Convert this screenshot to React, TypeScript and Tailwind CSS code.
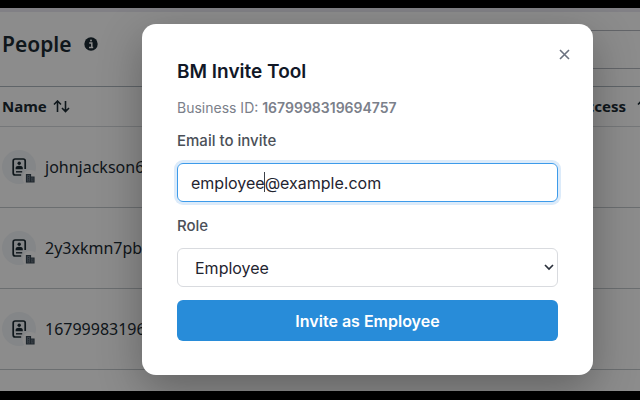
import { useState } from 'react'

const people = ['johnjackson6', '2y3xkmn7pb', '16799983196']

function SortIcon() {
  return (
    <svg width="17" height="13" viewBox="0 0 17 13" fill="none" stroke="currentColor" strokeWidth="1.6" aria-hidden="true">
      <path d="M4.5 12V1.5M1 4.5l3.5-3.5L8 4.5M12.5 1v10.5M9 8l3.5 3.5L16 8" />
    </svg>
  )
}

function PersonIcon() {
  return (
    <svg width="34" height="34" viewBox="0 0 34 34" fill="none" aria-hidden="true">
      <circle cx="17" cy="17" r="17" fill="#f1f4f7" />
      <path d="M23.2 19V11a2 2 0 0 0-2-2h-8a2 2 0 0 0-2 2v12a2 2 0 0 0 2 2h6" stroke="#1c2b33" strokeWidth="1.7" />
      <circle cx="17.2" cy="13.2" r="1.7" fill="#1c2b33" />
      <path d="M13.6 19.2V18c0-1.4 1.5-2.3 3.6-2.3s3.6.9 3.6 2.3v1.2z" fill="#1c2b33" />
      <path d="M14 21.8h6.2" stroke="#1c2b33" strokeWidth="1.4" />
      <circle cx="28.5" cy="28" r="8" fill="white" />
      <path d="M24.5 32V24.5h4V32zM28.5 27H32v5h-3.5z" fill="#6b7783" stroke="#3a4752" strokeWidth="1.2" />
      <path d="M26.5 26v5M30.3 28.5V31" stroke="#3a4752" strokeWidth="1" strokeDasharray="1.2 1" />
    </svg>
  )
}

function PeoplePage() {
  return (
    <div className="flex-1 overflow-hidden border-t-4 border-[#eceaf2] bg-white font-['Noto_Sans',sans-serif] text-[#1c2b33]">
      <div className="flex h-[74px] items-start justify-between">
        <div className="flex items-center gap-3 pt-4 pl-[2px]">
          <h1 className="text-[21px] leading-8 font-semibold">People</h1>
          <svg width="14" height="14" viewBox="0 0 14 14" aria-hidden="true">
            <circle cx="7" cy="7" r="6.7" fill="#1c2b33" />
            <path d="M5.2 6h2.6v4.2M5 10.5h4.2" stroke="white" strokeWidth="1.5" fill="none" />
            <circle cx="7" cy="3.4" r="1" fill="white" />
          </svg>
        </div>
        <div className="-mr-1 mt-[18px] h-[39px] w-1/2 border border-[#b4b9c0]" />
      </div>
      <table className="w-[calc(100%+14px)] border-collapse">
        <thead>
          <tr className="h-10 border-t border-b border-t-[#aeb6be] border-b-[#d5d9dd] text-[15px]">
            <th className="p-0 pl-[2px] text-left font-bold">
              <div className="flex items-center gap-[6px]">
                Name
                <SortIcon />
              </div>
            </th>
            <th className="p-0 font-bold">
              <div className="flex items-center justify-end gap-[11px]">
                Access
                <SortIcon />
              </div>
            </th>
          </tr>
        </thead>
        <tbody>
          {people.map((name) => (
            <tr key={name} className="h-[81px] border-b border-[#c3c8cd]">
              <td className="p-0 pl-[2px]" colSpan={2}>
                <div className="flex items-center gap-[9px] text-base">
                  <PersonIcon />
                  {name}
                </div>
              </td>
            </tr>
          ))}
        </tbody>
      </table>
    </div>
  )
}

export default function App() {
  const [email, setEmail] = useState('employee@example.com')
  const [role, setRole] = useState('Employee')

  return (
    <div className="relative flex h-screen flex-col overflow-hidden bg-black pt-2 pb-[9px] font-[Inter,sans-serif]">
      <PeoplePage />

      <div className="absolute inset-x-0 top-2 bottom-[9px] overflow-hidden bg-black/45 pt-4 pr-[47px] pl-[142px]">
        <div
          role="dialog"
          aria-labelledby="invite-title"
          className="relative rounded-[14px] bg-white px-[35px] pt-9 pb-[34px] shadow-[0_14px_44px_rgba(0,0,0,0.3)]"
        >
          <button aria-label="Close" className="absolute top-[23px] right-[21px] p-[2px] text-[#6b7280]">
            <svg width="11" height="11" viewBox="0 0 11 11" fill="none" stroke="currentColor" strokeWidth="1.6">
              <path d="M1 1l9 9M10 1l-9 9" />
            </svg>
          </button>

          <h2 id="invite-title" className="text-[19px] leading-6 font-semibold text-[#111827]">
            BM Invite Tool
          </h2>
          <p className="mt-3 text-sm leading-6 text-[#7b808a]">
            Business ID: <strong className="font-semibold">1679998319694757</strong>
          </p>

          <form onSubmit={(e) => e.preventDefault()}>
            <label htmlFor="email" className="mt-[9px] block text-[15px] leading-6 font-medium text-[#4b5058]">
              Email to invite
            </label>
            <div className="relative mt-[10px]">
              <input
                id="email"
                type="email"
                value={email}
                onChange={(e) => setEmail(e.target.value)}
                className="block h-[39px] w-full rounded-md border border-[#3d9bea] px-[13px] text-base text-[#1f2430] ring-3 ring-[#dcebfa] outline-none"
              />
              <span className="absolute top-[9px] left-[87px] h-5 w-px bg-[#3c4048]" />
            </div>

            <label htmlFor="role" className="mt-[12px] block text-[15px] leading-6 font-medium text-[#4b5058]">
              Role
            </label>
            <div className="relative mt-[10px]">
              <select
                id="role"
                value={role}
                onChange={(e) => setRole(e.target.value)}
                className="block h-[39px] w-full appearance-none rounded-md border border-[#d9dbdf] bg-white px-[17px] text-base text-[#1f2430]"
              >
                <option>Employee</option>
                <option>Admin</option>
              </select>
              <svg
                className="pointer-events-none absolute top-4 right-1"
                width="10"
                height="7"
                viewBox="0 0 10 7"
                fill="none"
                stroke="#2a303b"
                strokeWidth="1.7"
              >
                <path d="M1 1l4 4 4-4" />
              </svg>
            </div>

            <button type="submit" className="mt-[13px] h-[41px] w-full rounded-md bg-[#288cd9] text-base font-semibold text-white">
              Invite as {role}
            </button>
          </form>
        </div>
      </div>
    </div>
  )
}
